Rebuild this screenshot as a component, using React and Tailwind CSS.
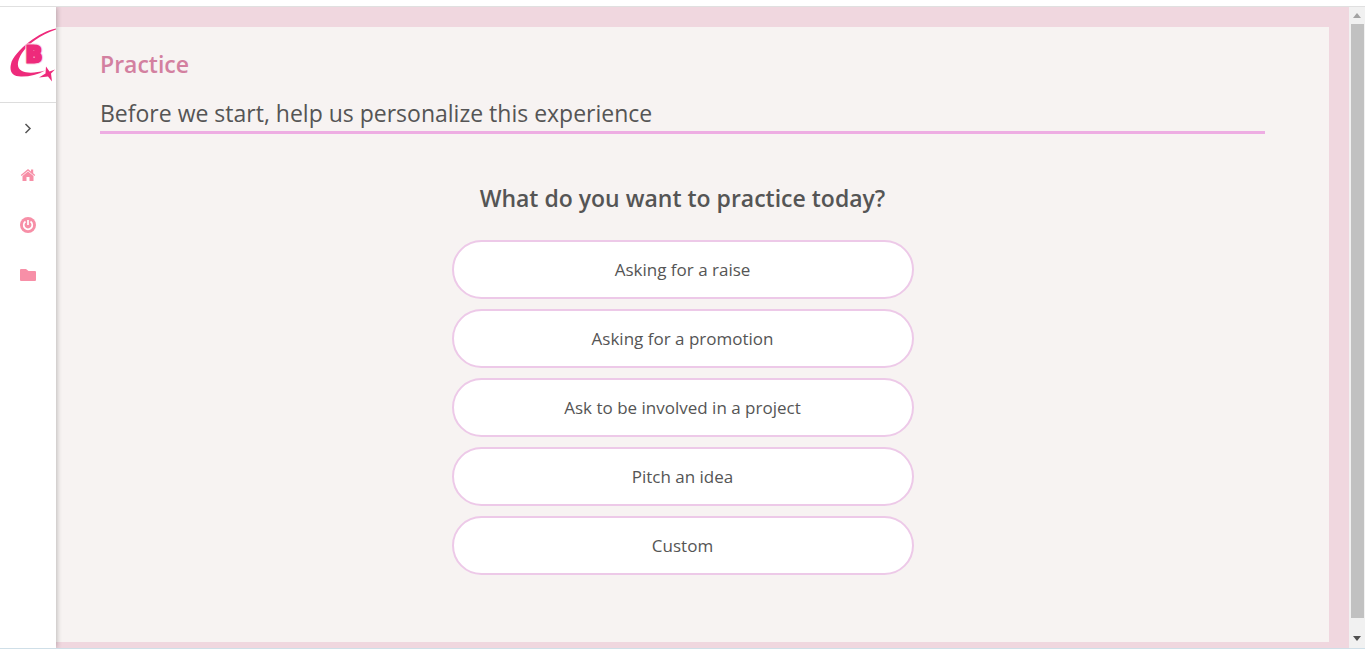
import React from "react";

const options = [
  "Asking for a raise",
  "Asking for a promotion",
  "Ask to be involved in a project",
  "Pitch an idea",
  "Custom",
];

const Logo = () => (
  <svg viewBox="0 0 46 56" className="w-[46px] h-14" aria-label="B logo">
    <path
      d="M46 1.500C38 3 28 8 19 15C10 22 2 31 1 37C-1 45 3 50 12 49.500C20 49.500 28 47.500 35 43.500C26 46 17 46.500 12 44C6 41 7 34 12 26C18 17 30 8 46 2.500Z"
      fill="#ee2a7b"
    />
    <g
      textAnchor="middle"
      fontSize="21"
      fontWeight="700"
      className="font-['DejaVu_Sans',sans-serif]"
    >
      <text
        x="24"
        y="34.500"
        fill="none"
        stroke="#f9dce6"
        strokeWidth="5"
        strokeLinejoin="round"
        aria-hidden="true"
      >
        B
      </text>
      <text x="24" y="34.500" fill="#ee2a7b" stroke="#ee2a7b" strokeWidth="3">
        B
      </text>
    </g>
    <path
      d="M36 39.500L39.500 44.500L45 42.500L41 46.500L42 54.500L38 49.500L29 50.500L35.500 46.500Z"
      fill="#ee2a7b"
    />
  </svg>
);

const Sidebar = () => (
  <aside className="relative flex w-14 shrink-0 flex-col bg-white shadow-[1px_0_5px_rgba(0,0,0,0.24)] [clip-path:inset(0_-8px_0_0)]">
    <a
      href="#"
      className="flex h-24 items-center justify-end border-b border-[#dddddd]"
    >
      <Logo />
    </a>
    <nav className="flex flex-col items-center text-[#f78fa7]">
      <button
        type="button"
        aria-label="Expand menu"
        className="flex h-[47px] w-full items-center justify-center pt-[2px]"
      >
        <svg
          viewBox="0 0 16 16"
          className="size-4 fill-none stroke-[#555555] stroke-[1.500]"
        >
          <path d="M5.500 4L10 8.500L5.500 13" />
        </svg>
      </button>
      <a
        href="#"
        aria-label="Home"
        className="flex h-[50px] w-full items-center justify-center"
      >
        <svg viewBox="0 0 16 14" className="h-[14px] w-4" fill="currentColor">
          <path d="M2.500 8L8 3.500L13.500 8V13H9.500V9H6.500V13H2.500Z" />
          <path d="M8 1L11 3.400V1.500H13.200V5.200L15.200 7L14.400 8L8 2.800L1.600 8L0.800 7Z" />
        </svg>
      </a>
      <a
        href="#"
        aria-label="Log out"
        className="flex h-[50px] w-full items-center justify-center"
      >
        <svg viewBox="0 0 16 16" className="size-4">
          <circle cx="8" cy="8" r="8" fill="currentColor" />
          <path
            d="M8 3V8M5.500 4.500A4.300 4.300 0 1 0 10.500 4.500"
            fill="none"
            stroke="#ffffff"
            strokeWidth="1.700"
          />
        </svg>
      </a>
      <a
        href="#"
        aria-label="Files"
        className="flex h-[50px] w-full items-center justify-center"
      >
        <svg viewBox="0 0 16 12" className="h-3 w-4" fill="currentColor">
          <path d="M1 0H6L8.500 2H15Q16 2 16 3V11Q16 12 15 12H1Q0 12 0 11V1Q0 0 1 0Z" />
        </svg>
      </a>
    </nav>
  </aside>
);

const App = () => {
  return (
    <div className="flex min-h-screen flex-col bg-white pt-[6px] font-['Open_Sans',sans-serif] text-[#555555]">
      <div className="flex grow border-t border-b border-t-[#e0e0e0] border-b-[#cfdfe8]">
        <Sidebar />
        <main className="flex grow bg-[#f0d7df] pt-5 pr-5 pb-[6px]">
          <section className="grow bg-[#f7f3f2] pt-[19px] pr-16 pb-16 pl-11">
            <h1 className="text-[23px] leading-9 font-semibold text-[#d380a0]">
              Practice
            </h1>
            <h2 className="mt-[13px] border-b-3 border-[#eeade3] text-[23px] leading-9">
              Before we start, help us personalize this experience
            </h2>
            <h3 className="mt-[46px] text-center text-[23px] leading-9 font-semibold">
              What do you want to practice today?
            </h3>
            <div className="mx-auto mt-6 flex max-w-[462px] flex-col gap-[10px]">
              {options.map((option) => (
                <button
                  key={option}
                  type="button"
                  className="h-[59px] rounded-full border-2 border-[#edc9e8] bg-white text-[17px]"
                >
                  {option}
                </button>
              ))}
            </div>
          </section>
        </main>
        <div className="flex w-4 shrink-0 flex-col items-center bg-[#f1f1f1]">
          <span className="my-[6px] h-[5px] w-2 bg-[#a3a3a3] [clip-path:polygon(50%_0,100%_100%,0_100%)]" />
          <span className="w-[13px] grow bg-[#c1c1c1]" />
          <span className="mt-[18px] mb-[7px] h-[5px] w-2 bg-[#505050] [clip-path:polygon(0_0,100%_0,50%_100%)]" />
        </div>
      </div>
    </div>
  );
};

export default App;
